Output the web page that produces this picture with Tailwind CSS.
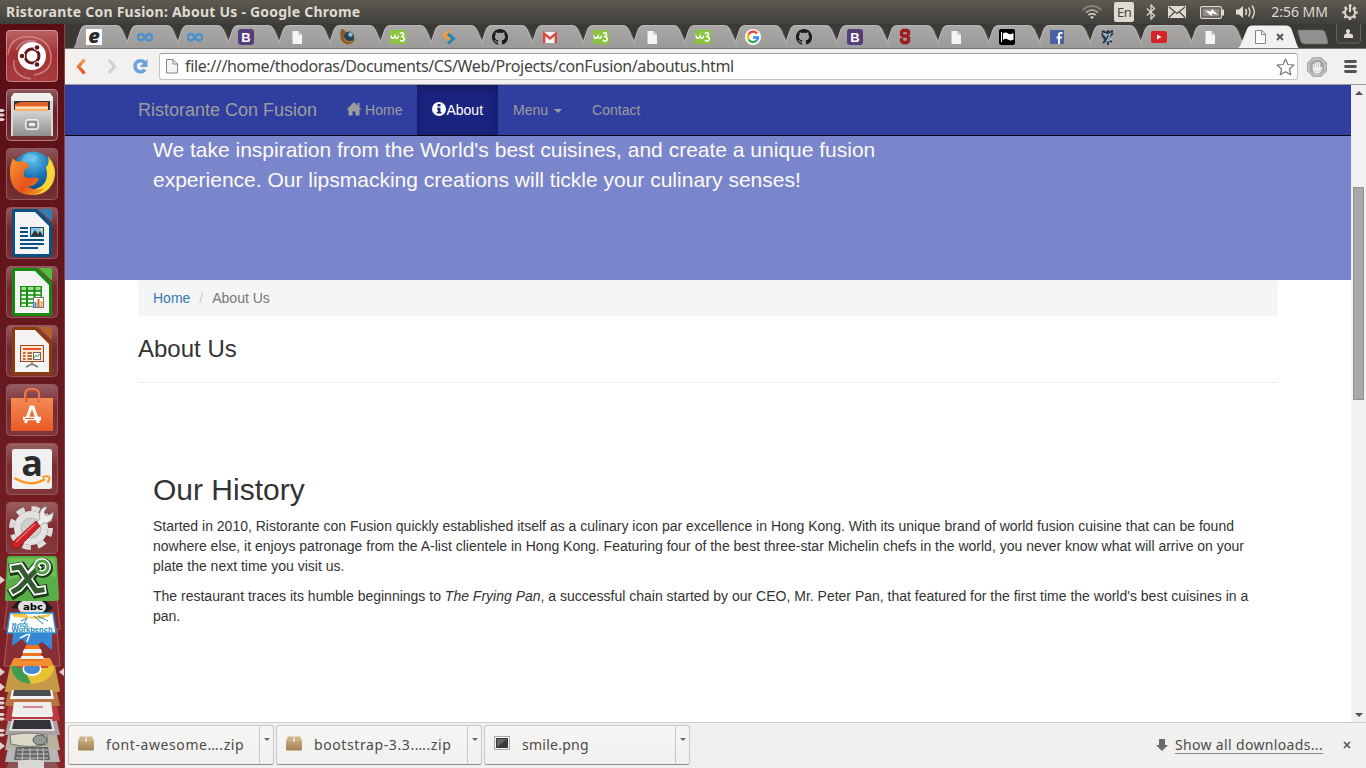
<!DOCTYPE html>
<html lang="en">
<head>
<meta charset="utf-8">
<title>Ristorante Con Fusion: About Us</title>
<script src="https://cdn.jsdelivr.net/npm/@tailwindcss/browser@4"></script>
</head>
<body class="w-[1366px] h-[768px] overflow-hidden flex flex-col bg-white font-['Noto_Sans',sans-serif]">

<!-- shared symbols -->
<svg width="0" height="0" class="absolute">
  <defs>
    <linearGradient id="tabg" x1="0" y1="0" x2="0" y2="1"><stop offset="0" stop-color="#a9a8a6"/><stop offset="1" stop-color="#9b9a98"/></linearGradient>
    <linearGradient id="tile" x1="0" y1="0" x2="0" y2="1"><stop offset="0" stop-color="#fff" stop-opacity=".3"/><stop offset=".45" stop-color="#fff" stop-opacity=".07"/><stop offset="1" stop-color="#fff" stop-opacity=".12"/></linearGradient>
    <linearGradient id="silver" x1="0" y1="0" x2="0" y2="1"><stop offset="0" stop-color="#d4d4d2"/><stop offset="1" stop-color="#8f8f8e"/></linearGradient>
    <linearGradient id="box" x1="0" y1="0" x2="0" y2="1"><stop offset="0" stop-color="#c8aa7e"/><stop offset="1" stop-color="#a18258"/></linearGradient>
    <linearGradient id="orange" gradientUnits="userSpaceOnUse" x1="0" y1="58" x2="0" y2="74"><stop offset="0" stop-color="#f7a065"/><stop offset="1" stop-color="#dd4a14"/></linearGradient>
    <linearGradient id="bag" x1="0" y1="0" x2="0" y2="1"><stop offset="0" stop-color="#f58a55"/><stop offset="1" stop-color="#ea5a25"/></linearGradient>
    <radialGradient id="globe" cx=".5" cy=".2" r=".8"><stop offset="0" stop-color="#5ec3ec"/><stop offset=".5" stop-color="#1a73b5"/><stop offset="1" stop-color="#0b3c7c"/></radialGradient>
    <linearGradient id="fox" x1="0" y1="0" x2="1" y2="1"><stop offset="0" stop-color="#f49b32"/><stop offset=".6" stop-color="#e5531c"/><stop offset="1" stop-color="#f5a51c"/></linearGradient>
    <symbol id="tab" viewBox="0 0 62 24" overflow="visible">
      <path d="M9.300 24Q6.800 24 5.300 21L3.400 17L7.500 5Q9 .5 12.500 .5H43.500Q47 .5 48.500 4L56 21Q57.500 24 60 24Z" fill="url(#tabg)"/>
      <path d="M3.600 16.500L7.500 5Q9 .5 12.500 .5H43.500Q47 .5 48.500 4L56 21Q57.500 24 60 24" fill="none" stroke="#c4c3c1" stroke-width=".9"/>
      <path d="M49.500 4L57 21Q58.500 24 61 24" stroke="#6f6e6a" fill="none" stroke-width=".7"/>
    </symbol>
    <symbol id="i-doc" viewBox="0 0 16 16"><path d="M3.500 2H9.500L13 5.500V15H3.500Z" fill="#f4f4f4"/><path d="M9.500 2V5.500H13Z" fill="#bbb"/></symbol>
    <symbol id="i-inf" viewBox="0 0 16 16"><path d="M8 8.300C6.500 5.500 5.500 5 4 5A3.200 3.200 0 0 0 4 11.400C7 11.400 9 5 12 5A3.200 3.200 0 0 1 12 11.400C10.500 11.400 9.500 10.800 8 8.300Z" fill="none" stroke="#4a90cf" stroke-width="2.300"/></symbol>
    <symbol id="i-b" viewBox="0 0 16 16"><rect width="16" height="16" rx="3" fill="#563d7c"/><text x="8" y="12.800" text-anchor="middle" font-family="Liberation Sans" font-weight="700" font-size="13" fill="#fff">B</text></symbol>
    <symbol id="i-w3" viewBox="0 0 16 16"><rect y="1" width="16" height="14" fill="#8ac53e"/><path d="M1 6.500Q1.500 10 3.500 9Q4.500 8 5 7Q5.500 10 7.500 9Q8.800 8 8.500 6.500M9.800 4.500Q13.500 2.800 13.500 5.200Q13.500 7.500 11 7.500Q14.500 7.500 14.200 10.200Q13.500 13 9.800 11.500" fill="none" stroke="#fff" stroke-width="1.500"/></symbol>
    <symbol id="i-git" viewBox="0 0 16 16"><path fill="#1b1b1b" d="M8 0C3.580 0 0 3.580 0 8c0 3.540 2.290 6.530 5.470 7.590.4.070.55-.17.55-.38 0-.19-.01-.82-.01-1.490-2.010.37-2.530-.49-2.690-.94-.09-.23-.48-.94-.82-1.130-.28-.15-.68-.52-.01-.53.63-.01 1.080.58 1.230.82.72 1.210 1.870.87 2.330.66.07-.52.28-.87.51-1.070-1.780-.2-3.640-.89-3.640-3.950 0-.87.31-1.590.82-2.150-.08-.2-.36-1.020.08-2.120 0 0 .67-.21 2.200.82.64-.18 1.320-.27 2-.27s1.360.09 2 .27c1.530-1.040 2.200-.82 2.200-.82.44 1.100.16 1.920.08 2.120.51.56.82 1.270.82 2.150 0 3.070-1.870 3.750-3.650 3.950.29.25.54.73.54 1.480 0 1.070-.01 1.930-.01 2.200 0 .21.15.46.55.38A8.010 8.010 0 0 0 16 8c0-4.420-3.580-8-8-8z"/></symbol>
  </defs>
</svg>

<!-- desktop panel -->
<header class="h-6 shrink-0 flex items-center bg-linear-to-b from-[#5d5a51] to-[#403f3a] text-[#dfdbd2] pl-1.5 pr-2">
  <div class="text-[14px] font-bold leading-6 whitespace-nowrap tracking-[0.23px]">Ristorante Con Fusion: About Us - Google Chrome</div>
  <div class="ml-auto flex items-center">
    <svg class="w-5 h-4 mr-3" viewBox="0 0 20 16" fill="none" stroke-width="1.700"><path d="M.5 6Q10-2 19.500 6" stroke="#85827b"/><path d="M4 8.500Q10 3.500 16 8.500" stroke="#a8a49c"/><path d="M6.500 11Q10 8.500 13.500 11" stroke="#dfdbd2"/><path d="M8 13L10 15L12 13Q10 11.500 8 13" fill="#dfdbd2"/></svg>
    <div class="w-5 h-5 rounded-[2px] bg-[#dfdbd2] text-[#45443f] text-[13px] leading-5 text-center mr-3 tracking-tight">En</div>
    <svg class="w-[10px] h-4 mr-3" viewBox="0 0 10 16" fill="none" stroke="#dfdbd2" stroke-width="1.300"><path d="M.8 4.500L8.500 11.500L5 15V1L8.500 4.500L.8 11.500"/></svg>
    <svg class="w-[18px] h-3 mr-[14px]" viewBox="0 0 18 12"><rect width="18" height="12" fill="#dfdbd2"/><path d="M1 1L9 7.500L17 1M1 11.500L6.500 6M17 11.500L11.500 6" fill="none" stroke="#4b4943" stroke-width="1.200"/></svg>
    <svg class="w-6 h-[13px] mr-3" viewBox="0 0 24 13"><rect x=".6" y=".6" width="20.800" height="11.800" rx="1.500" fill="none" stroke="#dfdbd2" stroke-width="1.200"/><rect x="2.500" y="2.500" width="17" height="8" fill="#8e8b83"/><rect x="22" y="3.500" width="2" height="6" fill="#dfdbd2"/><path d="M5 4.500L11 5.500L12 3L18 9L12.500 7.300L11.500 10Z" fill="#fff"/></svg>
    <svg class="w-5 h-4 mr-[15px]" viewBox="0 0 20 16" fill="none" stroke="#dfdbd2" stroke-width="1.400"><path d="M0 5.500H3L7 2V14L3 10.500H0Z" fill="#dfdbd2" stroke="none"/><path d="M9.500 5Q11.500 8 9.500 11M12.500 3.500Q15.500 8 12.500 12.500"/><path d="M16 1.500Q20.500 8 16 14.500"/></svg>
    <div class="text-[14px] leading-6 mr-[14px] whitespace-nowrap">2:56 MM</div>
    <svg class="w-4 h-4" viewBox="0 0 16 16" fill="none" stroke="#dfdbd2"><circle cx="8" cy="8.500" r="6.700" stroke-width="2" stroke-dasharray="2.600 2.660" stroke-dashoffset="1.300"/><path d="M5.300 4.200A5.100 5.100 0 1 0 10.700 4.200" stroke-width="1.900"/><path d="M8 0V8" stroke-width="2"/></svg>
  </div>
</header>

<div class="flex flex-1 min-h-0">
  <!-- launcher -->
  <aside class="w-[65px] shrink-0 bg-linear-to-b from-[#5a0e15] via-[#681a1f] to-[#8a2426] border-r border-[#8b4447] flex flex-col items-center pt-1.5 relative overflow-hidden">
    <svg class="absolute left-0 top-0 w-1.5 h-full" viewBox="0 0 6 744" fill="#e2cfd0"><path d="M0 85h3l2 1.500l-2 1.500H0zM0 89.500h3l2 1.500l-2 1.500H0zM0 94h3l2 1.500l-2 1.500H0z"/></svg>
    <div class="flex flex-col gap-[7px]">
      <svg class="w-13 h-13" viewBox="0 0 52 52"><rect x=".5" y=".5" width="51" height="51" rx="4" fill="#9c2225" stroke="#c46f72"/><rect width="52" height="52" rx="4" fill="url(#tile)"/><path d="M2 25Q4 5 26 7Q45 10 45 28M8 30Q6 46 25 49M10 20Q15 9 30 11M28 45Q47 42 45 24" fill="none" stroke="#dc9b9c" stroke-width="1.500" opacity=".7"/><circle cx="26" cy="26" r="14" fill="#fff"/><circle cx="26" cy="26" r="7" fill="none" stroke="#681719" stroke-width="3"/><path d="M19 26H13M29.500 20L32 16M29.500 32L32 36" stroke="#fff" stroke-width="5"/><g fill="#681719"><circle cx="16" cy="26" r="2.300"/><circle cx="31" cy="17.500" r="2.300"/><circle cx="31" cy="34.500" r="2.300"/></g></svg>
      <svg class="w-13 h-13" viewBox="0 0 52 52"><rect x=".5" y=".5" width="51" height="51" rx="4" fill="url(#tile)" stroke="#b47c80"/><path d="M8 4H44L47 12V47H5V12Z" fill="#d9d9d7"/><path d="M5 12H47V8L44 4H8L5 8Z" fill="#efefed"/><rect x="8" y="12" width="36" height="9" fill="#353535"/><path d="M9 15L15 13H42V22H9Z" fill="#e0622d"/><path d="M9 17H42V22H9Z" fill="#f7b26a"/><path d="M10 19H42" stroke="#fff"/><rect x="7" y="22" width="38" height="25" fill="url(#silver)"/><rect x="19.500" y="30.500" width="13" height="10" rx="2" fill="#d0d0cf" stroke="#eee"/><rect x="22" y="33" width="8" height="5" fill="#eee" stroke="#444"/></svg>
      <svg class="w-13 h-13" viewBox="0 0 52 52"><rect x=".5" y=".5" width="51" height="51" rx="4" fill="url(#tile)" stroke="#96575c"/><circle cx="27" cy="25" r="21.500" fill="url(#globe)"/><path d="M20 6Q27 5 32 9L29 14L23 13L19 17L15 13Z" fill="#7fd0ef" opacity=".5"/><path d="M42 8Q52 20 48 32Q43 46 28 47L26 42Q45 38 40 19Q44 16 42 8Z" fill="#fbd436"/><path d="M7 10Q10 15 15 13Q20 14 23 17L22 20Q18 21 18 24Q16 30 24 30Q29 28 33 31Q29 39 22 38Q28 44 38 40Q33 48 24 47Q9 46 5 33Q2 21 7 10Z" fill="url(#fox)"/></svg>
      <svg class="w-13 h-13" viewBox="0 0 52 52"><rect x=".5" y=".5" width="51" height="51" rx="4" fill="url(#tile)" stroke="#96575c"/><path d="M8 2H31L46 17V48Q46 50 44 50H8Q6 50 6 48V4Q6 2 8 2Z" fill="#0b5083"/><path d="M33 2H44Q46 2 46 4V15Z" fill="#2f7fb4"/><path d="M9 5H29L43 19V47H9Z" fill="#f4f4f4"/><path d="M14 21H22M14 25H22M14 29H22M14 33H38M14 37H38M14 41H32" stroke="#0b5083" stroke-width="2"/><rect x="24.500" y="20.500" width="13" height="9" fill="#87c5eb" stroke="#0b5083"/><path d="M25 29L29 23L32 27L34 24L37 29Z" fill="#333"/><circle cx="35.500" cy="22.500" r="1.500" fill="#f6d74a"/></svg>
      <svg class="w-13 h-13" viewBox="0 0 52 52"><rect x=".5" y=".5" width="51" height="51" rx="4" fill="url(#tile)" stroke="#96575c"/><path d="M8 2H31L46 17V48Q46 50 44 50H8Q6 50 6 48V4Q6 2 8 2Z" fill="#158a0d"/><path d="M33 2H44Q46 2 46 4V15Z" fill="#4fbf3e"/><path d="M9 5H29L43 19V47H9Z" fill="#f4f4f4"/><rect x="14" y="20" width="22" height="21" fill="#168d10"/><path d="M15.500 22.500H20M22 22.500H27.500M29.500 22.500H34.500" stroke="#9be08e" stroke-width="3"/><path d="M15.500 27H20M22 27H27.500M29.500 27H34.500M15.500 31H20M22 31H27.500M15.500 35H20M22 35H27.500M15.500 39H20M22 39H27.500M29.500 31H34.500" stroke="#eaf8e6" stroke-width="2.400"/><rect x="27.500" y="31.500" width="10" height="10" fill="#fff" stroke="#777"/><path d="M28.500 36h2v5h-2z" fill="#2b8fe0"/><path d="M31.500 33h2v8h-2z" fill="#e2571f"/><path d="M34.500 35h2v6h-2z" fill="#f1a52c"/></svg>
      <svg class="w-13 h-13" viewBox="0 0 52 52"><rect x=".5" y=".5" width="51" height="51" rx="4" fill="url(#tile)" stroke="#96575c"/><path d="M8 2H31L46 17V48Q46 50 44 50H8Q6 50 6 48V4Q6 2 8 2Z" fill="#8d3b0d"/><path d="M33 2H44Q46 2 46 4V15Z" fill="#b4622b"/><path d="M9 5H29L43 19V47H9Z" fill="#f4f4f4"/><rect x="14.500" y="20.500" width="23" height="16" fill="#fde6d6" stroke="#a64616"/><path d="M17 24H35" stroke="#e2571f" stroke-width="2"/><path d="M17 28H19.500M21.500 28H26M17 31H19.500M21.500 31H26M17 34H19.500M21.500 34H26" stroke="#a64616" stroke-width="1.500"/><rect x="27.500" y="27.500" width="7" height="7" fill="#fff" stroke="#666"/><path d="M28 33L30 30L31.500 32L34 28.500" stroke="#39a02c" fill="none"/><path d="M26 37V39L20 42M26 39L32 42" stroke="#777" stroke-width="1.500" fill="none"/></svg>
      <svg class="w-13 h-13" viewBox="0 0 52 52"><rect x=".5" y=".5" width="51" height="51" rx="4" fill="url(#tile)" stroke="#96575c"/><path d="M5 14H47V47H5Z" fill="url(#bag)"/><path d="M20 18V10Q20 6 24 6H29Q33 6 33 10V18" fill="none" stroke="#c5532c" stroke-width="2.500"/><path d="M19 17V9Q20 5 24 5H28Q32 5 33 9V17" fill="none" stroke="#f2845c" stroke-width="1.500"/><path d="M19.500 39L25 23H27L32.500 39" fill="none" stroke="#fff" stroke-width="3"/><path d="M17 34.500H35" stroke="#fff" stroke-width="3.500"/><path d="M19 34.500H28" stroke="#e9612b" stroke-width="1.200"/></svg>
      <svg class="w-13 h-13" viewBox="0 0 52 52"><rect x=".5" y=".5" width="51" height="51" rx="4" fill="url(#tile)" stroke="#96575c"/><rect x="6" y="6" width="40" height="40" rx="2.500" fill="#f1f1f1"/><text x="26" y="33" text-anchor="middle" font-family="Open Sans" font-weight="700" font-size="36" fill="#2b2b2b">a</text><path d="M8.500 35Q25 45 39 36" fill="none" stroke="#f7981d" stroke-width="2.400"/><path d="M36 34Q41 32.500 43.500 34Q44 36 41.500 40" fill="none" stroke="#f7981d" stroke-width="1.800"/></svg>
      <svg class="w-13 h-13" viewBox="0 0 52 52"><rect x=".5" y=".5" width="51" height="51" rx="4" fill="url(#tile)" stroke="#96575c"/><circle cx="25" cy="26" r="19.500" fill="none" stroke="#dcdcda" stroke-width="5" stroke-dasharray="8.300 7"/><circle cx="25" cy="26" r="17" fill="#e2e2e0"/><circle cx="25" cy="26" r="10" fill="#cfcfcd" stroke="#b5b5b3"/><path d="M28 22L34 17Q32 9 38 5L41 5L38 10L40 14L45 12L47 10Q48 18 41 21L37 21L32 26Z" fill="#ececea" stroke="#999" stroke-width=".8"/><path d="M30 19L34 24L13 45Q9 48 6.500 45Q4.500 42 8 39Z" fill="#cf2127" stroke="#8f1215" stroke-width=".8"/><path d="M29 22L10 40" stroke="#ee6c6e" stroke-width="1.500"/></svg>
    </div>
    <!-- folded launcher icons -->
    <svg class="absolute left-0 top-[530px] w-16 h-[214px]" viewBox="0 0 64 214">
      <path d="M8 42L57 42L60 75L4 75Z" fill="#7c2c31" stroke="#b0757a" stroke-width=".7"/>
      <path d="M8 75L57 75L60 112L4 112Z" fill="#872f34" stroke="#b0757a" stroke-width=".7"/>
      <path d="M11 54L18 47H46L53 54L46 59Z" fill="#1b1b1b"/><ellipse cx="32" cy="53" rx="14" ry="8" fill="#dedede"/><text x="33" y="56" text-anchor="middle" font-family="DejaVu Sans" font-weight="700" font-size="8" textLength="20" lengthAdjust="spacingAndGlyphs">abc</text>
      <path d="M13 78H52V96L42 88L31 95L22 85L12 92Z" fill="#3987d7"/><path d="M20 84L30 79L27 88" stroke="#fff" stroke-width="1.500" fill="none"/>
      <path d="M10 59H53L56 79H7Z" fill="#fff" stroke="#2491ca" stroke-width="1.500"/><path d="M12 60H26L29 63L50 60V62L40 65L14 63Z" fill="#f7c63c"/><path d="M21 67L27 64L24 70M34 62L43 70M38 62L48 67" stroke="#2491ca" fill="none"/><text x="12" y="72.500" font-family="Liberation Sans" font-weight="700" font-size="5" fill="#1686be">MySQL</text><text x="11.500" y="78" font-family="Liberation Sans" font-weight="700" font-size="6.500" fill="#1686be" textLength="41" lengthAdjust="spacingAndGlyphs">Workbench</text>
      <g transform="translate(0 1)"><path d="M10 1H54Q57 1 57 4L59 43Q59 46 56 46H7Q4 46 5 43L7 4Q7 1 10 1Z" fill="#58ae47"/><path d="M9 3H55L56 22Q30 18 8 25Z" fill="#86cd6b" opacity=".5"/><g fill="none" stroke-linecap="square"><path d="M15 14L21 13L37 37L42 36M15 37L20 34L36 14" stroke="#193e17" stroke-width="12"/><circle cx="43" cy="13" r="6" stroke="#193e17" stroke-width="8"/><path d="M14 13L20 12L36 36L42 35M14 36L19 33L36 13" stroke="#fff" stroke-width="8.500"/><circle cx="42" cy="12" r="6" stroke="#fff" stroke-width="6"/><path d="M14 13L20 12L36 36L42 35M14 36L19 33L37 14" stroke="#335b32" stroke-width="5"/><circle cx="42" cy="12" r="6" stroke="#51a142" stroke-width="3"/></g></g>
      <path d="M10 112H55L60 136Q60 138 58 138H6Q4 138 5 136Z" fill="#c49a47"/>
      <path d="M11 112H54Q54 127 32 130Q12 128 11 112Z" fill="#e8c233"/><path d="M11 112Q12 128 31 130L23 112Z" fill="#419b50"/><path d="M18 109H48V114H18Z" fill="#de4a3b"/><ellipse cx="32" cy="115" rx="9.500" ry="7" fill="#fff"/><ellipse cx="32" cy="114.500" rx="8" ry="5.500" fill="#4689d4"/>
      <path d="M14 104H50L54 112H10Z" fill="#f38e31"/><path d="M26 91H39L43 107H20Z" fill="#ee7520"/><path d="M24 95H41L42 99H22.500Z" fill="#f2f2f2"/><path d="M21.500 102H43L44 105H20.500Z" fill="#f2f2f2"/>
      <path d="M8 138H57L60 152H5Z" fill="#b67443"/><path d="M12 136H52L54 145H10Z" fill="#f2f2f2"/><path d="M14 136H50L51 142H13Z" fill="#4b4c4e"/>
      <path d="M8 152H57L60 167H5Z" fill="#b93b42"/><path d="M14 148H51L53 161Q53 163 50 163H14Q11 163 12 161Z" fill="#eee"/><path d="M23 153H43" stroke="#c7666b" stroke-width="1.500"/>
      <path d="M8 167H57L60 181H5Z" fill="#a7a0a4"/><path d="M12 165H52L55 177H9Z" fill="#dcdcdc"/><path d="M14 166H50L52 175H12Z" fill="#323336"/>
      <path d="M8 181H57L60 196H5Z" fill="#b7b19d"/><path d="M10 181Q30 177 47 181V190Q30 195 11 190Z" fill="#ddd9c8" stroke="#77766e"/><ellipse cx="40" cy="186" rx="7" ry="5" fill="#929993" stroke="#555"/>
      <path d="M8 194H57L60 208H5Z" fill="#b7b6b6"/><path d="M16 193H48L50 206H14Z" fill="#646568"/><path d="M17 196H48M17 200H48M16 204H48M23 194L22 206M30 194V206M37 194L38 206M43 194L44 206" stroke="#c2c2c3"/>
      <path d="M9 208H56L59 214H6Z" fill="#8c5256"/><path d="M18 207Q30 204 44 207V214H18Z" fill="#d9d7d3"/>
      <g fill="#e2cfd0"><path d="M0 22L5 26L0 30ZM0 114L5 118L0 122ZM64 114L59 118L64 122ZM0 129L5 133L0 137ZM0 188L5 192L0 196Z"/><path d="M0 143h3l2 1.500l-2 1.500H0zM0 147.500h3l2 1.500l-2 1.500H0zM0 152h3l2 1.500l-2 1.500H0zM0 159h3l2 1.500l-2 1.500H0zM0 163.500h3l2 1.500l-2 1.500H0zM0 175h3l2 1.500l-2 1.500H0zM0 179.500h3l2 1.500l-2 1.500H0z"/></g>
    </svg>
  </aside>

  <!-- browser window -->
  <div class="flex-1 min-w-0 flex flex-col">
    <!-- tab strip -->
    <div class="h-[25px] shrink-0 bg-[#3b3a36] border-b border-[#777673] overflow-hidden">
      <svg class="w-[1301px] h-[25px] block" viewBox="65 24 1301 25">
        <g id="strip">
          <path d="M73 49Q75 48 76 45L81 29Q83 25.500 86 25.500H100V49Z" fill="url(#tabg)"/>
          <use href="#tab" x="73" y="25" width="62" height="24"/><path d="M73 49L77.500 40L84 42V49Z" fill="#9e9d9b"/>
          <use href="#tab" x="123.700" y="25" width="62" height="24"/><use href="#tab" x="174.400" y="25" width="62" height="24"/><use href="#tab" x="225" y="25" width="62" height="24"/><use href="#tab" x="275.700" y="25" width="62" height="24"/><use href="#tab" x="326.400" y="25" width="62" height="24"/><use href="#tab" x="377.100" y="25" width="62" height="24"/><use href="#tab" x="427.800" y="25" width="62" height="24"/><use href="#tab" x="478.500" y="25" width="62" height="24"/><use href="#tab" x="529.100" y="25" width="62" height="24"/><use href="#tab" x="579.800" y="25" width="62" height="24"/><use href="#tab" x="630.500" y="25" width="62" height="24"/><use href="#tab" x="681.200" y="25" width="62" height="24"/><use href="#tab" x="731.900" y="25" width="62" height="24"/><use href="#tab" x="782.600" y="25" width="62" height="24"/><use href="#tab" x="833.200" y="25" width="62" height="24"/><use href="#tab" x="883.900" y="25" width="62" height="24"/><use href="#tab" x="934.600" y="25" width="62" height="24"/><use href="#tab" x="985.300" y="25" width="62" height="24"/><use href="#tab" x="1036" y="25" width="62" height="24"/><use href="#tab" x="1086.700" y="25" width="62" height="24"/><use href="#tab" x="1137.400" y="25" width="62" height="24"/><use href="#tab" x="1188" y="25" width="62" height="24"/>
        </g>
        <path d="M1236 49Q1239 48 1240.500 45L1247 29Q1248.500 25.500 1252 25.500H1286Q1290 25.500 1291.500 29L1297 45Q1298.500 49 1301 49Z" fill="#f2f1f0"/>
        <path d="M1298 32Q1297 30 1300 30H1321Q1324 30 1325 32L1328 42Q1328 44 1326 44H1305Q1302 44 1301 42Z" fill="#91908e" stroke="#6f6e6b" stroke-width=".6"/>
        <rect x="1336.500" y="22" width="24" height="21" rx="3" fill="#3f3e3a" stroke="#65645f"/>
        <path d="M1344 38V35.500Q1344 34 1347 33.500Q1345.500 31.500 1346 30.500Q1348 27.500 1350 30.500Q1350.500 31.500 1349 33.500Q1353 34 1353 35.500V38Z" fill="#dfdbd2"/>
        <rect x="86" y="29" width="16" height="16" fill="#fff"/><text x="94" y="42.500" text-anchor="middle" font-family="Open Sans" font-style="italic" font-weight="800" font-size="20" fill="#2b2b2b">e</text>
        <use href="#i-inf" x="137" y="29" width="16" height="16"/><use href="#i-inf" x="187" y="29" width="16" height="16"/>
        <use href="#i-b" x="238" y="29" width="16" height="16"/><use href="#i-doc" x="289" y="29" width="16" height="16"/>
        <path d="M341 29Q345 29 345.500 32L345 36Q350 33 354 38L355 40L352 43Q350 45 346 44Q338 41 341 29Z" fill="#8b5a20"/><circle cx="349" cy="36.500" r="5" fill="#24455b"/><path d="M344 38Q346 43 352 41.500" stroke="#b37a2c" stroke-width="1.500" fill="none"/><circle cx="350.500" cy="34.500" r="2.200" fill="#8fbfd8"/>
        <use href="#i-w3" x="390" y="29" width="16" height="16"/>
        <path d="M449.500 30.500L444 35.500L450 40" fill="none" stroke="#f39a3c" stroke-width="3"/><path d="M448 34L453.500 38.500L448 43.500" fill="none" stroke="#1c87b0" stroke-width="3"/>
        <use href="#i-git" x="492" y="29" width="16" height="16"/>
        <rect x="543" y="32" width="14" height="11" fill="#f3f3f3"/><path d="M544.200 43V33.500L550 38.500L555.800 33.500V43" fill="none" stroke="#d94a3d" stroke-width="2.400"/>
        <use href="#i-w3" x="593" y="29" width="16" height="16"/><use href="#i-doc" x="644" y="29" width="16" height="16"/><use href="#i-w3" x="695" y="29" width="16" height="16"/>
        <circle cx="753" cy="37" r="8" fill="#fff"/><g fill="none" stroke-width="2.400"><path d="M757 33.500A5 5 0 0 0 748.600 34.500" stroke="#ea4335"/><path d="M748.600 34.500A5 5 0 0 0 748.600 39.500" stroke="#fbbc05"/><path d="M748.600 39.500A5 5 0 0 0 756.500 40.700" stroke="#34a853"/><path d="M756.500 40.700A5 5 0 0 0 758 37.500H753" stroke="#4285f4"/></g>
        <use href="#i-git" x="796" y="29" width="16" height="16"/><use href="#i-b" x="847" y="29" width="16" height="16"/>
        <path d="M908.500 35V31.500L907 30.500H903L901.500 32V34.500L903 36H907L908.500 37.500V41L907 42.500H903L901.500 41V38" fill="none" stroke="#9b1b1e" stroke-width="3.300"/>
        <use href="#i-doc" x="948" y="29" width="16" height="16"/>
        <rect x="999" y="29" width="16" height="16" rx="2" fill="#000"/><path d="M1001.500 32V42" stroke="#fff"/><path d="M1003 33.500Q1005.500 31.500 1008 33.500Q1010.500 35 1013.500 33V39.500Q1010.500 41.500 1008 39.500Q1005.500 38 1003 40Z" fill="#fff"/>
        <rect x="1050" y="30" width="14" height="14" fill="#4763a5"/><path d="M1062.500 33H1060.500Q1059 33 1059 35V44M1056.500 37.500H1062" fill="none" stroke="#fff" stroke-width="2"/>
        <path d="M1102 31L1107 33L1113 31M1102 36L1112 42M1103 43L1113 33M1108 30V45M1102 33L1106 42" fill="none" stroke="#2b3b49" stroke-width="2"/><path d="M1103 34L1110 35L1107 41L1112 39" fill="none" stroke="#9fc6e0" stroke-width="1.200"/>
        <rect x="1151" y="31" width="16" height="12" rx="2" fill="#d52428"/><path d="M1157 34.500L1161.500 37L1157 39.500Z" fill="#fff"/>
        <use href="#i-doc" x="1202" y="29" width="16" height="16"/>
        <path d="M1255.500 30.500H1262L1265.500 34V43.500H1255.500ZM1261.500 30.500V34.500H1265.500" fill="#fafafa" stroke="#858585"/>
        <path d="M1277 34L1283 40M1283 34L1277 40" stroke="#55534f" stroke-width="1.800"/>
      </svg>
    </div>

    <!-- toolbar -->
    <div class="h-9 shrink-0 bg-[#f2f1f0] border-b border-[#9d9c9b] flex items-center pl-[10px] pr-[9px]">
      <svg class="w-[74px] h-5 mr-[10px]" viewBox="75 56 74 20" fill="none"><path d="M84.500 58.500L78.500 65.500L84.500 72.500" stroke="url(#orange)" stroke-width="3.400"/><path d="M109 59L114.500 65.500L109 72" stroke="#d0cfcd" stroke-width="3"/><path d="M144.500 61.500A5.500 5.500 0 1 0 145 68.500" stroke="#6ba3dc" stroke-width="3.600"/><path d="M147.500 58V66H139.500Z" fill="#6ba3dc"/></svg>
      <div class="flex-1 h-[27px] bg-white border border-[#c4c3c2] border-t-[#9e9d9c] rounded-[3px] flex items-center pl-1.5 pr-[3px]">
        <svg class="w-3 h-4 mr-[7px] mb-px" viewBox="0 0 12 16"><path d="M.5 1.500H7L11.500 6V15H.5ZM7 1.500V6H11.500" fill="#f4f4f4" stroke="#858585"/></svg>
        <span class="text-[16px] leading-6 -mt-px text-[#454442] tracking-[-0.36px] whitespace-nowrap">file:///home/thodoras/Documents/CS/Web/Projects/conFusion/aboutus.html</span>
        <svg class="w-[19px] h-[18px] ml-auto -mr-px" viewBox="0 0 19 18"><path d="M9.500 1L11.900 6.500L18 7L13.400 11L14.800 16.800L9.500 13.700L4.200 16.800L5.600 11L1 7L7.100 6.500Z" fill="#fff" stroke="#777674" stroke-width="1.200" stroke-linejoin="round"/></svg>
      </div>
      <svg class="w-5 h-5 ml-[9px]" viewBox="0 0 20 20"><path d="M6 .5H14L19.500 6V14L14 19.500H6L.5 14V6Z" fill="#a6a5a4" stroke="#aaa"/><path d="M6.600 2H13.400L18 6.600V13.400L13.400 18H6.600L2 13.400V6.600Z" fill="none" stroke="#ddd"/><path d="M6.500 7V12Q6.500 16 10 16Q13 16 14.500 11L13 10.500L12.500 11V5.500M10.500 5V11M8.500 5.500V11" stroke="#efefef" stroke-width="1.500" fill="none"/><path d="M7 10H13V13Q10 17 7 13Z" fill="#efefef"/></svg>
      <svg class="w-[13px] h-[13px] ml-[17px]" viewBox="0 0 13 13"><path d="M1.500 1.500H11.500M1.500 6.500H11.500M1.500 11.500H11.500" stroke="#555452" stroke-width="2.800" stroke-linecap="round"/></svg>
    </div>

    <!-- page -->
    <div class="flex flex-1 min-h-0">
      <main class="flex-1 min-w-0 overflow-hidden bg-white font-['Liberation_Sans',Arial,sans-serif] text-sm leading-5 text-[#333]">
        <nav class="h-[51px] bg-[#303f9f] border-b border-[#080808] pl-[73px] flex text-[#9d9d9d]">
          <a class="text-lg leading-5 pt-[15px] pr-[15px]">Ristorante Con Fusion</a>
          <a class="px-[15px] pt-[15px] flex"><svg class="w-4 h-[14px] mt-[2px] mr-[3px] -ml-px" viewBox="-1 0 16 14"><path d="M7 0L14.500 7.500H12.500V13.500H8.500V9.500H5.500V13.500H1.500V7.500H-.5Z" fill="#9d9d9d"/><path d="M10.500 1H12.500V5H10.500Z" fill="#9d9d9d"/></svg>Home</a>
          <a class="px-[15px] pt-[15px] flex bg-[#1a237e] text-white shadow-[inset_0_3px_9px_rgba(0,0,0,0.25)]"><svg class="w-[14px] h-[14px] mt-[2px]" viewBox="0 0 14 14"><circle cx="7" cy="7" r="7" fill="#fff"/><path d="M5.500 2H8.500V4.500H5.500ZM5 5.700H8.500V10H9.500V11.500H4.800V10H5.800V7.200H5Z" fill="#1a237e"/></svg>About</a>
          <a class="px-[15px] pt-[15px] flex">Menu<svg class="w-2 h-1 mt-[9px] ml-[6px]" viewBox="0 0 8 4"><path d="M0 0H8L4 4Z" fill="#9d9d9d"/></svg></a>
          <a class="px-[15px] pt-[15px]">Contact</a>
        </nav>
        <section class="h-36 bg-[#7986cb] pl-[88px] flex text-[#fffaf5] text-[21px] leading-[30px]">
          <p class="w-[750px] -mt-px">We take inspiration from the World's best cuisines, and create a unique fusion experience. Our lipsmacking creations will tickle your culinary senses!</p>
        </section>
        <div class="w-[1140px] ml-[73px]">
          <ol class="h-9 bg-[#f5f5f5] rounded-[4px] px-[15px] py-2 flex"><li class="text-[#337ab7]">Home</li><li class="text-[#ccc] px-[9px]">/</li><li class="text-[#777]">About Us</li></ol>
          <h3 class="text-2xl leading-[26px] mt-5">About Us</h3>
          <hr class="border-[#eee] mt-5">
          <div class="px-[15px] pt-[90px]">
            <h2 class="text-[30px] leading-[33px]">Our History</h2>
            <p class="mt-[10px]">Started in 2010, Ristorante con Fusion quickly established itself as a culinary icon par excellence in Hong Kong. With its unique brand of world fusion cuisine that can be found nowhere else, it enjoys patronage from the A-list clientele in Hong Kong. Featuring four of the best three-star Michelin chefs in the world, you never know what will arrive on your plate the next time you visit us.</p>
            <p class="mt-[10px]">The restaurant traces its humble beginnings to <em>The Frying Pan</em>, a successful chain started by our CEO, Mr. Peter Pan, that featured for the first time the world's best cuisines in a pan.</p>
          </div>
        </div>
      </main>
      <div class="w-[15px] shrink-0 bg-[#f1f1f1] flex flex-col items-center pt-1.5 pb-[5px]">
        <svg class="w-2 h-1" viewBox="0 0 8 4"><path d="M0 4H8L4 0Z" fill="#505050"/></svg>
        <div class="mt-[92px] w-[11px] h-[213px] bg-[#a8a8a8] border border-[#929292]"></div>
        <svg class="w-2 h-1 mt-auto" viewBox="0 0 8 4"><path d="M0 0H8L4 4Z" fill="#505050"/></svg>
      </div>
    </div>

    <!-- downloads shelf -->
    <footer class="h-[46px] shrink-0 bg-[#f1f0ef] border-t border-[#d0cfce] flex items-start pl-[3px] pt-0.5 text-[14px] text-[#4c4b49]">
      <div class="w-[206px] h-10 mr-0.5 rounded-[3px] border border-[#c9c8c7] border-b-[#908f8e] bg-linear-to-b from-[#f7f6f5] to-[#f1f0ef] flex">
        <svg class="w-4 h-[15px] mt-[10px] ml-[9px] shrink-0" viewBox="0 0 16 15"><rect y="4" width="16" height="10.500" rx="1" fill="url(#box)"/><path d="M2 .5H14L16 5H0Z" fill="#cdb28b"/><path d="M7 .5H9V6H7Z" fill="#e8dbc4"/></svg>
        <span class="ml-3 leading-[38px] w-[153px] shrink-0 tracking-[0.6px] whitespace-nowrap">font-awesome….zip</span>
        <span class="border-l border-[#c9c8c7] pl-1 pt-3"><svg class="w-1.5 h-[3px]" viewBox="0 0 6 3"><path d="M0 0H6L3 3Z" fill="#686765"/></svg></span>
      </div>
      <div class="w-[206px] h-10 mr-0.5 rounded-[3px] border border-[#c9c8c7] border-b-[#908f8e] bg-linear-to-b from-[#f7f6f5] to-[#f1f0ef] flex">
        <svg class="w-4 h-[15px] mt-[10px] ml-[9px] shrink-0" viewBox="0 0 16 15"><rect y="4" width="16" height="10.500" rx="1" fill="url(#box)"/><path d="M2 .5H14L16 5H0Z" fill="#cdb28b"/><path d="M7 .5H9V6H7Z" fill="#e8dbc4"/></svg>
        <span class="ml-3 leading-[38px] w-[153px] shrink-0 tracking-[0.6px] whitespace-nowrap">bootstrap-3.3.….zip</span>
        <span class="border-l border-[#c9c8c7] pl-1 pt-3"><svg class="w-1.5 h-[3px]" viewBox="0 0 6 3"><path d="M0 0H6L3 3Z" fill="#686765"/></svg></span>
      </div>
      <div class="w-[206px] h-10 rounded-[3px] border border-[#c9c8c7] border-b-[#908f8e] bg-linear-to-b from-[#f7f6f5] to-[#f1f0ef] flex">
        <svg class="w-4 h-[15px] mt-[10px] ml-[9px] shrink-0" viewBox="0 0 16 15"><rect x=".5" y=".5" width="15" height="13" fill="#f4f4f4" stroke="#aaa"/><rect x="2" y="2" width="12" height="10" fill="#3b3b3b"/><path d="M3 3H13L3 11Z" fill="#666"/></svg>
        <span class="ml-3 leading-[38px] w-[153px] shrink-0 tracking-[0.25px] whitespace-nowrap">smile.png</span>
        <span class="border-l border-[#c9c8c7] pl-1 pt-3"><svg class="w-1.5 h-[3px]" viewBox="0 0 6 3"><path d="M0 0H6L3 3Z" fill="#686765"/></svg></span>
      </div>
      <div class="ml-auto flex items-center h-10 pr-[15px]">
        <svg class="w-3 h-3 mr-[7px]" viewBox="0 0 12 12"><path d="M3 0H9V6H12L6 12L0 6H3Z" fill="#6b6a68"/></svg>
        <span class="underline underline-offset-[3px] decoration-[#8c8b89] leading-5 whitespace-nowrap tracking-[0.34px]">Show all downloads...</span>
        <svg class="w-2 h-2 ml-5" viewBox="0 0 8 8"><path d="M1 1L7 7M7 1L1 7" stroke="#575654" stroke-width="1.700"/></svg>
      </div>
    </footer>
  </div>
</div>
</body>
</html>
